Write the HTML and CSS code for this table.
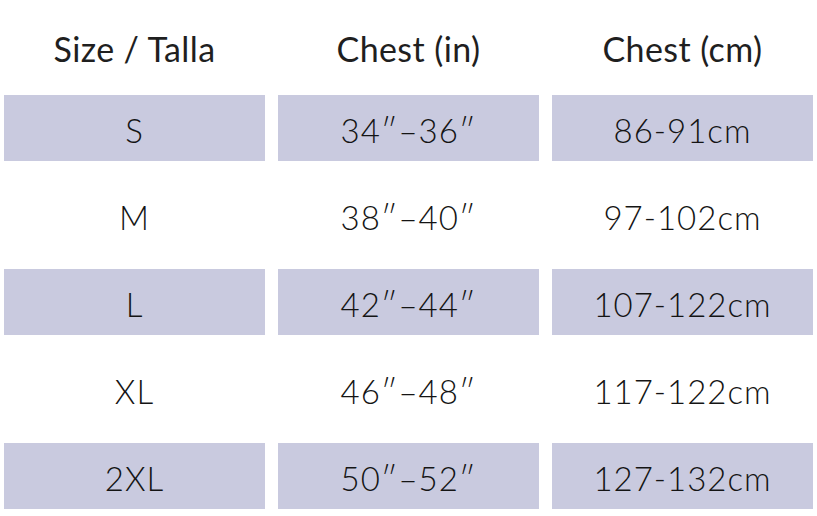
FILE: index.html
```html
<!DOCTYPE html>
<html>
<head>
<meta charset="utf-8">
<link rel="stylesheet" href="styles.css">
</head>
<body>
<div class="chart">
  <div class="head">Size / Talla</div>
  <div class="head">Chest (in)</div>
  <div class="head">Chest (cm)</div>

  <div class="cell shaded">S</div>
  <div class="cell shaded">34″–36″</div>
  <div class="cell shaded">86-91cm</div>

  <div class="cell">M</div>
  <div class="cell">38″–40″</div>
  <div class="cell">97-102cm</div>

  <div class="cell shaded">L</div>
  <div class="cell shaded">42″–44″</div>
  <div class="cell shaded">107-122cm</div>

  <div class="cell">XL</div>
  <div class="cell">46″–48″</div>
  <div class="cell">117-122cm</div>

  <div class="cell shaded">2XL</div>
  <div class="cell shaded">50″–52″</div>
  <div class="cell shaded">127-132cm</div>
</div>
</body>
</html>
```

FILE: styles.css
```css
html, body {
  margin: 0;
  padding: 0;
  background: #ffffff;
}

.chart {
  display: grid;
  grid-template-columns: 261px 261px 261px;
  grid-template-rows: 74px repeat(5, 66px);
  column-gap: 13px;
  row-gap: 21px;
  padding-left: 4px;
  font-family: Lato, "Open Sans", sans-serif;
  color: #262626;
}

.head {
  display: flex;
  align-items: flex-start;
  justify-content: center;
  font-size: 34px;
  font-weight: 400;
  color: #1f1f1f;
  letter-spacing: 0.4px;
  padding-top: 32px;
  line-height: 34px;
}

.cell {
  display: flex;
  align-items: center;
  justify-content: center;
  font-size: 33px;
  font-weight: 300;
  color: #141414;
  letter-spacing: 1px;
  padding-top: 4px;
  box-sizing: border-box;
}

.shaded {
  background: #c9cadf;
}
```
